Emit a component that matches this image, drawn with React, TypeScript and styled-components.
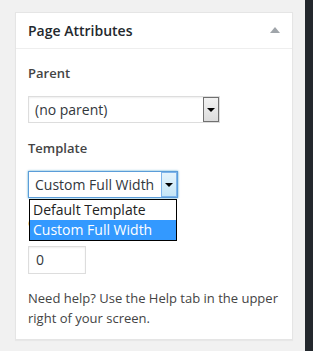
import styled, { createGlobalStyle } from "styled-components";

const GlobalStyle = createGlobalStyle`
  html, body {
    margin: 0;
    padding: 0;
    background: #f1f1f1;
  }
  body {
    font-family: "Open Sans", "Noto Sans", sans-serif;
    color: #444;
  }
`;

const Page = styled.div`
  display: flex;
  width: 313px;
  height: 351px;
  overflow: hidden;
`;

const Main = styled.div`
  flex: 1;
  padding: 12px 0 0 15px;
`;

const DarkStrip = styled.div`
  width: 8px;
  background: #23282d;
`;

const Box = styled.div`
  width: 278px;
  height: 328px;
  background: #fff;
  border: 1px solid #e5e5e5;
  box-shadow: 0 1px 1px rgba(0, 0, 0, 0.04);
  box-sizing: border-box;
`;

const Header = styled.div`
  display: flex;
  align-items: center;
  justify-content: space-between;
  height: 35px;
  padding: 0 12px 0 12px;
  border-bottom: 1px solid #eee;
`;

const Title = styled.h2`
  margin: 0;
  font-size: 14px;
  font-weight: 600;
  color: #23282d;
`;

const Toggle = styled.span`
  width: 0;
  height: 0;
  border-left: 5px solid transparent;
  border-right: 5px solid transparent;
  border-bottom: 6px solid #a0a5aa;
  margin-top: -2px;
`;

const Inside = styled.div`
  padding: 16px 12px 0 12px;
  position: relative;
`;

const Label = styled.p`
  margin: 0 0 14px;
  font-size: 13px;
  font-weight: 600;
  line-height: 17px;
  color: #444;
`;

const Select = styled.div<{ $width: number; $focused?: boolean }>`
  display: flex;
  width: ${({ $width }) => $width}px;
  height: 27px;
  box-sizing: border-box;
  border: 1px solid ${({ $focused }) => ($focused ? "#5b9dd9" : "#ddd")};
  box-shadow: ${({ $focused }) =>
    $focused ? "0 0 2px rgba(30, 140, 190, 0.8)" : "inset 0 1px 2px rgba(0,0,0,.07)"};
  background: #fff;
  margin-bottom: 17px;
`;

const SelectValue = styled.span`
  flex: 1;
  padding-left: 6px;
  font-size: 14px;
  line-height: 25px;
  color: #32373c;
  white-space: nowrap;
  overflow: hidden;
`;

const Arrow = styled.span<{ $focused?: boolean }>`
  display: flex;
  align-items: center;
  justify-content: center;
  width: 16px;
  box-sizing: border-box;
  border: 1px solid ${({ $focused }) => ($focused ? "#7eb4ea" : "#707070")};
  background: ${({ $focused }) =>
    $focused
      ? "linear-gradient(#e5f4fc, #c4e5f6)"
      : "linear-gradient(#f2f2f2, #dcdcdc)"};

  &::after {
    content: "";
    border-left: 4px solid transparent;
    border-right: 4px solid transparent;
    border-top: 4px solid #000;
  }
`;

const TemplateWrap = styled.div`
  position: relative;
`;

const DropList = styled.ul`
  position: absolute;
  top: 28px;
  left: 1px;
  width: 148px;
  margin: 0;
  padding: 0;
  list-style: none;
  background: #fff;
  border: 1px solid #000;
  box-sizing: border-box;
  z-index: 2;
`;

const Option = styled.li<{ $active?: boolean }>`
  height: 20px;
  padding-left: 3px;
  font-size: 14px;
  line-height: 20px;
  color: ${({ $active }) => ($active ? "#fff" : "#222")};
  background: ${({ $active }) => ($active ? "#3399ff" : "transparent")};
  white-space: nowrap;
`;

const NumberInput = styled.div`
  width: 58px;
  height: 28px;
  box-sizing: border-box;
  border: 1px solid #ddd;
  box-shadow: inset 0 1px 2px rgba(0, 0, 0, 0.07);
  padding-left: 7px;
  font-size: 14px;
  line-height: 26px;
  color: #32373c;
  margin-bottom: 14px;
`;

const Help = styled.p`
  margin: 0;
  font-size: 13px;
  line-height: 20px;
  color: #444;
`;

export default function App() {
  return (
    <>
      <GlobalStyle />
      <Page>
        <Main>
          <Box>
            <Header>
              <Title>Page Attributes</Title>
              <Toggle />
            </Header>
            <Inside>
              <Label>Parent</Label>
              <Select $width={192}>
                <SelectValue>(no parent)</SelectValue>
                <Arrow />
              </Select>
              <Label>Template</Label>
              <TemplateWrap>
                <Select $width={150} $focused>
                  <SelectValue>Custom Full Width</SelectValue>
                  <Arrow $focused />
                </Select>
                <DropList>
                  <Option>Default Template</Option>
                  <Option $active>Custom Full Width</Option>
                </DropList>
              </TemplateWrap>
              <Label>Order</Label>
              <NumberInput>0</NumberInput>
              <Help>Need help? Use the Help tab in the upper right of your screen.</Help>
            </Inside>
          </Box>
        </Main>
        <DarkStrip />
      </Page>
    </>
  );
}
